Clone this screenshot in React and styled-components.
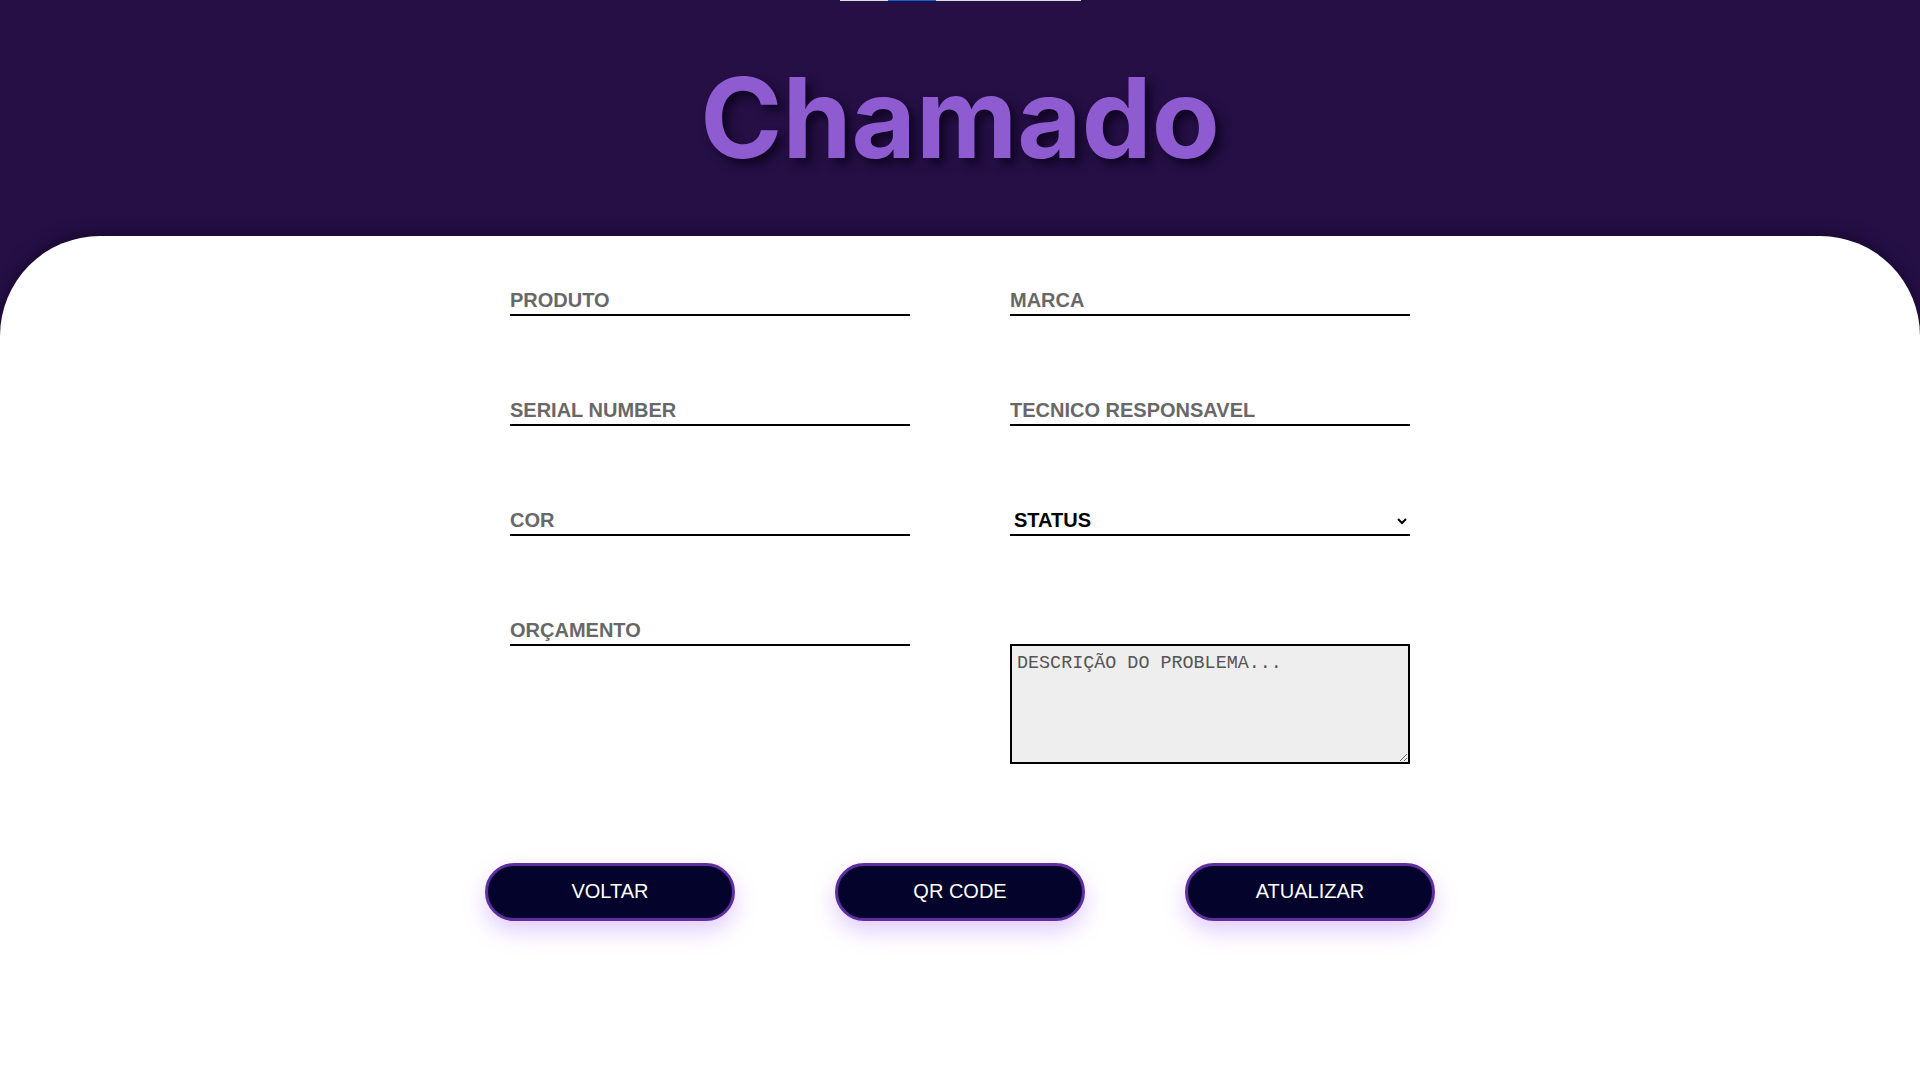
import React from "react";
import styled, { createGlobalStyle } from "styled-components";

const GlobalStyle = createGlobalStyle`
  html, body {
    margin: 0;
    padding: 0;
    background: #250f45;
    font-family: "Liberation Sans", Arial, sans-serif;
  }
  * { box-sizing: border-box; }
`;

const Page = styled.div`
  min-height: 100vh;
  display: flex;
  flex-direction: column;
  background: #250f45;
`;

const Header = styled.header`
  height: 236px;
  display: flex;
  flex-direction: column;
  align-items: center;
`;

const Progress = styled.div`
  width: 241px;
  height: 1px;
  background: #dcdcdc;
  display: flex;
  padding-left: 48px;
`;

const ProgressFill = styled.div`
  width: 48px;
  height: 1px;
  background: #0a64d2;
`;

const Title = styled.h1`
  margin: 0;
  flex: 1;
  display: flex;
  align-items: center;
  font-family: Inter, "Noto Sans", sans-serif;
  font-weight: 700;
  font-size: 111px;
  color: #8e5bd0;
  text-shadow: 6px 6px 10px rgba(10, 0, 25, 0.75);
  padding-bottom: 2px;
`;

const Panel = styled.main`
  flex: 1;
  background: #ffffff;
  border-radius: 100px 100px 0 0;
  box-shadow: 0 -4px 14px rgba(15, 4, 30, 0.55);
  display: flex;
  flex-direction: column;
  align-items: center;
  padding-top: 50px;
`;

const Form = styled.form`
  display: grid;
  grid-template-columns: 400px 400px;
  column-gap: 100px;
  row-gap: 80px;
`;

const Field = styled.input`
  width: 400px;
  height: 30px;
  border: none;
  border-bottom: 2px solid #000;
  background: transparent;
  padding: 0;
  font-family: "Liberation Sans", Arial, sans-serif;
  font-weight: 700;
  font-size: 20px;
  color: #000;
  outline: none;
  &::placeholder {
    color: #686868;
    opacity: 1;
  }
`;

const Select = styled.select`
  width: 400px;
  height: 30px;
  border: none;
  border-bottom: 2px solid #000;
  border-radius: 0;
  background: transparent;
  font-family: "Liberation Sans", Arial, sans-serif;
  font-weight: 700;
  font-size: 20px;
  color: #000;
  outline: none;
`;

const TextCell = styled.div`
  padding-top: 28px;
`;

const TextArea = styled.textarea`
  display: block;
  width: 400px;
  height: 120px;
  border: 2px solid #000;
  background: #eeeeee;
  padding: 7px 5px;
  font-family: "Liberation Mono", "DejaVu Sans Mono", monospace;
  font-size: 18.4px;
  color: #000;
  outline: none;
  &::placeholder {
    color: #555555;
    opacity: 1;
  }
`;

const Actions = styled.div`
  display: flex;
  gap: 100px;
  margin-top: 99px;
`;

const Button = styled.button`
  width: 250px;
  height: 58px;
  border-radius: 30px;
  border: 3px solid #5e2d9e;
  background: #03032c;
  color: #ffffff;
  font-family: "Liberation Sans", Arial, sans-serif;
  font-size: 20px;
  padding: 0 0 2px;
  cursor: pointer;
  box-shadow: 0 10px 22px rgba(170, 110, 255, 0.35);
`;

export default function App() {
  return (
    <Page>
      <GlobalStyle />
      <Header>
        <Progress>
          <ProgressFill />
        </Progress>
        <Title>Chamado</Title>
      </Header>
      <Panel>
        <Form onSubmit={(e) => e.preventDefault()}>
          <Field placeholder="PRODUTO" />
          <Field placeholder="MARCA" />
          <Field placeholder="SERIAL NUMBER" />
          <Field placeholder="TECNICO RESPONSAVEL" />
          <Field placeholder="COR" />
          <Select defaultValue="">
            <option value="">STATUS</option>
            <option value="aberto">ABERTO</option>
            <option value="andamento">EM ANDAMENTO</option>
            <option value="concluido">CONCLUÍDO</option>
          </Select>
          <Field placeholder="ORÇAMENTO" />
          <TextCell>
            <TextArea placeholder="DESCRIÇÃO DO PROBLEMA..." />
          </TextCell>
        </Form>
        <Actions>
          <Button type="button">VOLTAR</Button>
          <Button type="button">QR CODE</Button>
          <Button type="button">ATUALIZAR</Button>
        </Actions>
      </Panel>
    </Page>
  );
}
